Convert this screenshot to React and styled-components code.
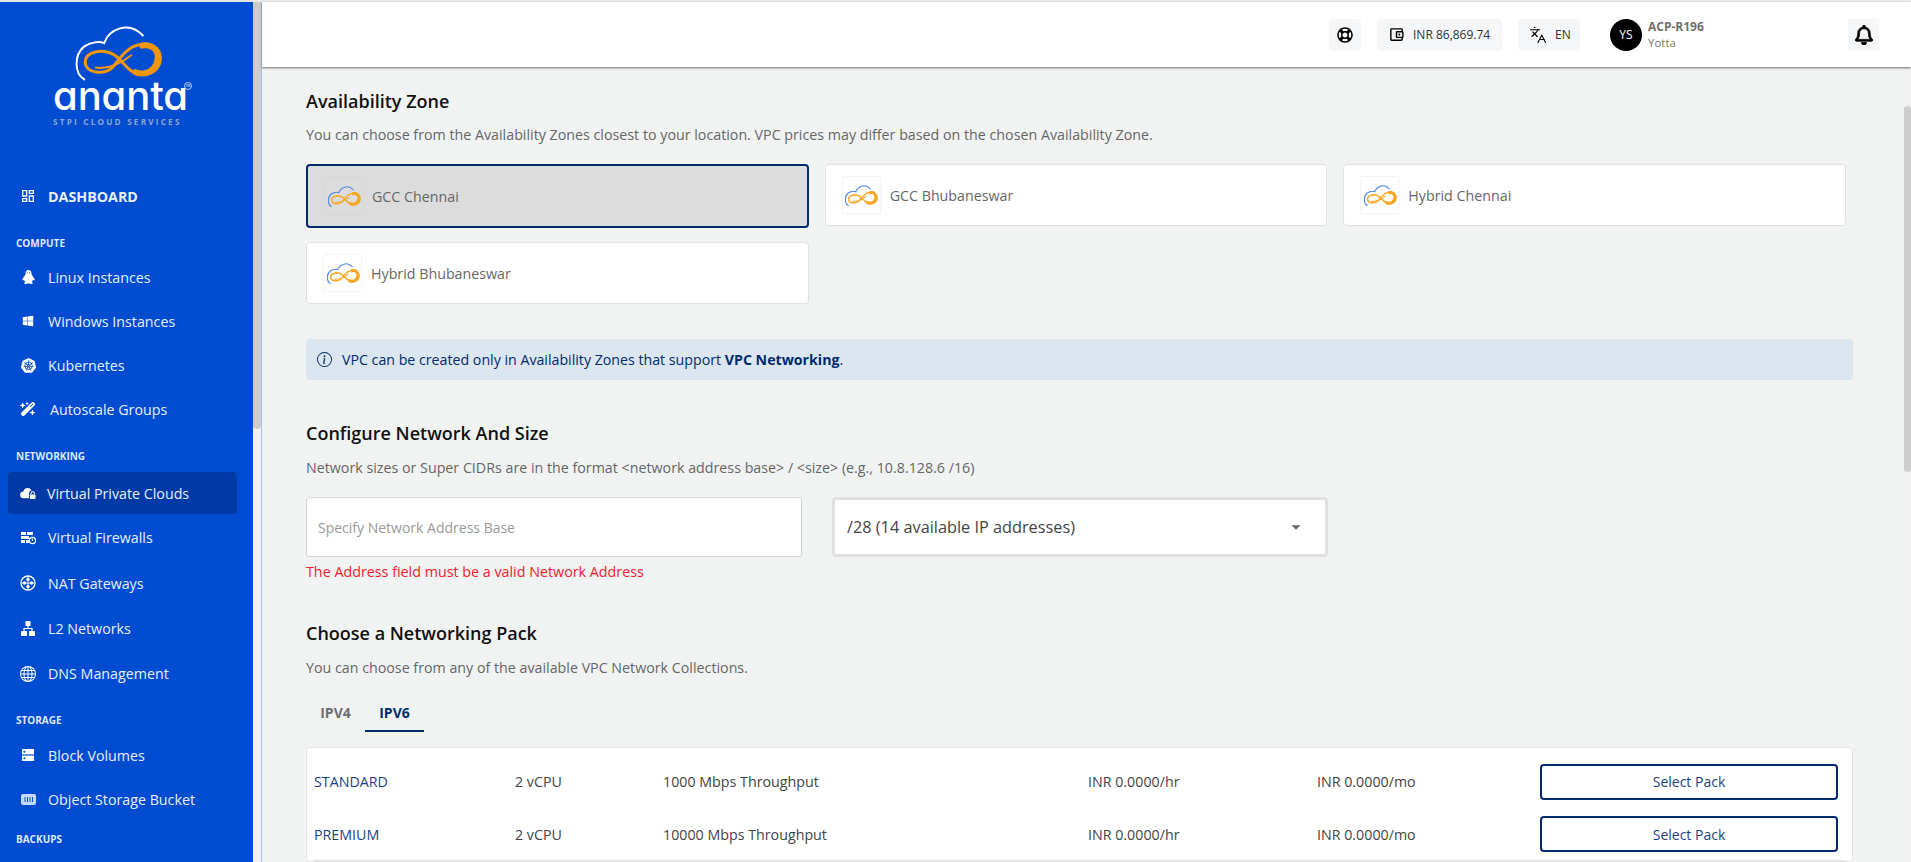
import styled, { createGlobalStyle } from 'styled-components';
import { FaWindows, FaRegLifeRing, FaRegBell } from 'react-icons/fa';
import { FaWandMagicSparkles } from 'react-icons/fa6';
import { SiKubernetes } from 'react-icons/si';
import { BsGlobe, BsInfoCircle } from 'react-icons/bs';
import { MdOutlineDashboard, MdOutlineAccountBalanceWallet, MdArrowDropDown } from 'react-icons/md';
import { Languages } from 'lucide-react';

const NAVY = '#002b6f';

const GlobalStyle = createGlobalStyle`
  html, body { margin: 0; height: 100%; overflow: hidden; }
  body { font-family: "Open Sans", "Noto Sans", sans-serif; background: #f1f3f3; }
  * { box-sizing: border-box; }
`;

const Shell = styled.div`
  display: flex;
  height: 862px;
  padding-top: 2px;
  background: #e8e8e8;
  overflow: hidden;
`;

const Sidebar = styled.aside`
  width: 253px;
  flex: none;
  background: #004cd1;
  color: #e8f0ff;
  overflow: hidden;
`;

const Track = styled.div`
  flex: none;
  width: ${(p) => p.$width}px;
  background: #f1f1f1;
`;

const Thumb = styled.div`
  width: 100%;
  height: ${(p) => p.$height}px;
  margin-top: ${(p) => p.$top || 0}px;
  background: #cdcdcd;
  border-radius: ${(p) => (p.$top ? '4px' : '0 0 4px 4px')};
`;

const Rule = styled.div`
  flex: none;
  width: 1px;
  background: #a9c3e6;
`;

const Brand = styled.div`
  height: 172px;
  padding: 21px 0 0 53px;
`;

const BrandMark = styled.div`
  margin-left: 20px;
  height: 59px;
  line-height: 0;
`;

const WordmarkRow = styled.div`
  position: relative;
  width: 131px;
  height: 34px;
  margin-top: -3px;
`;

const Wordmark = styled.div`
  font-family: Inter, "Open Sans", sans-serif;
  font-feature-settings: 'cv11' 1;
  font-size: 40px;
  font-weight: 500;
  line-height: 34px;
  color: #fff;
  letter-spacing: -0.1px;
`;

const Tm = styled.span`
  position: absolute;
  left: 131px;
  top: 3px;
  width: 8px;
  height: 8px;
  border: 1px solid #b9cdf2;
  border-radius: 50%;
  font-size: 3px;
  line-height: 6px;
  text-align: center;
  color: #fff;
`;

const Tagline = styled.div`
  width: 140px;
  margin-top: 4px;
  font-size: 8.2px;
  font-weight: 700;
  line-height: 10px;
  letter-spacing: 2.2px;
  color: #8fa5cc;
  white-space: nowrap;
`;

const NavLabel = styled.div`
  padding: ${(p) => p.$top}px 0 ${(p) => p.$bottom}px 16px;
  font-size: 10px;
  font-weight: 700;
  line-height: 14px;
  color: #dfe9ff;
`;

const NavRow = styled.div`
  display: flex;
  align-items: center;
  gap: ${(p) => p.$gap || 12}px;
  height: ${(p) => p.$height || 44}px;
  padding-left: 20px;
  font-size: 14.25px;
  font-weight: ${(p) => (p.$strong ? 700 : 400)};
  white-space: nowrap;
`;

const ActiveRow = styled(NavRow)`
  height: 42px;
  width: 229px;
  margin: 1px 0 1px 8px;
  padding-left: 12px;
  background: #003aa6;
  border-radius: 4px;
`;

const NavIcon = styled.span`
  display: flex;
  align-items: center;
  justify-content: center;
  width: 16px;
  font-size: ${(p) => p.$size || 14}px;
  color: #fff;
`;

const Main = styled.main`
  flex: 1;
  min-width: 0;
  display: flex;
  flex-direction: column;
  background: #f1f3f3;
`;

const TopBar = styled.header`
  position: relative;
  z-index: 1;
  flex: none;
  display: flex;
  align-items: center;
  justify-content: flex-end;
  gap: 16px;
  height: 65px;
  padding-right: 32px;
  background: #fff;
  box-shadow: 0 1px 2px rgba(0, 0, 0, 0.55);
`;

const Chip = styled.div`
  display: flex;
  align-items: center;
  justify-content: ${(p) => (p.$center ? 'center' : 'flex-start')};
  gap: 8px;
  width: ${(p) => p.$width}px;
  height: 32px;
  padding-left: ${(p) => (p.$center ? 0 : 11)}px;
  background: #f5f6f8;
  border-radius: ${(p) => (p.$square ? 0 : 4)}px;
  font-size: 12px;
  color: #333;
  svg { color: #000; font-size: ${(p) => p.$icon || 17}px; }
`;

const Profile = styled.div`
  display: flex;
  align-items: center;
  gap: 6px;
  width: 222px;
  margin-left: 14px;
`;

const Avatar = styled.div`
  display: flex;
  align-items: center;
  justify-content: center;
  width: 32px;
  height: 32px;
  border-radius: 50%;
  background: #000;
  color: #fff;
  font-size: 12px;
`;

const ProfileName = styled.div`
  font-size: 12px;
  font-weight: 700;
  line-height: 16px;
  color: #707070;
`;

const ProfileOrg = styled.div`
  font-size: 11.5px;
  line-height: 16px;
  color: #777;
`;

const Body = styled.div`
  flex: 1;
  min-height: 0;
  display: flex;
`;

const Content = styled.div`
  flex: 1;
  min-width: 0;
  padding: 22px 51px 0 44px;
  overflow: hidden;
`;

const Heading = styled.h2`
  margin: ${(p) => p.$top || 0}px 0 0;
  font-size: 18px;
  font-weight: 600;
  line-height: 24px;
  color: #111;
`;

const Sub = styled.p`
  margin: ${(p) => p.$top || 12}px 0 19px;
  font-size: 14.25px;
  line-height: 20px;
  white-space: nowrap;
  color: #666;
`;

const ZoneGrid = styled.div`
  display: grid;
  grid-template-columns: repeat(3, 1fr);
  gap: 14px 16px;
  align-items: start;
  margin-right: 7px;
`;

const Zone = styled.div`
  display: flex;
  align-items: center;
  gap: 10px;
  height: ${(p) => (p.$selected ? 64 : 62)}px;
  padding-left: 17px;
  background: ${(p) => (p.$selected ? '#dcdcdc' : '#fff')};
  border: ${(p) => (p.$selected ? `2px solid ${NAVY}` : '1px solid #dfe1e3')};
  border-radius: 4px;
  font-size: 14.25px;
  color: #666;
`;

const ZoneLogo = styled.div`
  display: flex;
  align-items: center;
  justify-content: center;
  width: 37px;
  height: 36px;
  background: ${(p) => (p.$selected ? '#dcdcdc' : '#fff')};
  box-shadow: 0 0 2px rgba(0, 0, 0, ${(p) => (p.$selected ? 0.06 : 0.14)});
`;

const Notice = styled.div`
  display: flex;
  align-items: center;
  gap: 10px;
  height: 41px;
  margin-top: 35px;
  padding-left: 11px;
  background: #dce6f0;
  border-radius: 4px;
  font-size: 14.2px;
  color: ${NAVY};
  svg { font-size: 15px; }
`;

const FieldRow = styled.div`
  display: flex;
  gap: 30px;
`;

const AddressInput = styled.input`
  display: block;
  width: 496px;
  height: 60px;
  padding: 0 11px;
  background: #fff;
  border: 1px solid #cfd3d8;
  border-radius: 3px;
  font: 14px "Open Sans", sans-serif;
  &::placeholder { color: #9a9a9a; opacity: 1; }
`;

const SizeSelect = styled.div`
  display: flex;
  align-items: center;
  justify-content: space-between;
  width: 496px;
  height: 60px;
  padding: 0 18px 0 12px;
  background: #fff;
  border: 3px solid #e0e0e0;
  border-radius: 4px;
  font-size: 16.3px;
  color: #444;
  svg { font-size: 22px; color: #666; }
`;

const FieldError = styled.div`
  margin-top: 5px;
  font-size: 14.3px;
  line-height: 20px;
  color: #f0212e;
`;

const Tabs = styled.div`
  display: flex;
  margin-top: -1px;
`;

const Tab = styled.div`
  width: 59px;
  height: 36px;
  padding-top: 7px;
  text-align: center;
  font-size: 14px;
  font-weight: 700;
  line-height: 20px;
  color: ${(p) => (p.$active ? NAVY : '#6f6f6f')};
  border-bottom: 2px solid ${(p) => (p.$active ? NAVY : 'transparent')};
`;

const PackCard = styled.div`
  margin-top: 15px;
  padding: 7px 7px 0;
  background: #fff;
  border: 1px solid #e2e4e6;
  border-radius: 4px;
`;

const PackRow = styled.div`
  display: grid;
  grid-template-columns: 201px 148px 425px 229px 223px 298px;
  align-items: center;
  height: 53px;
  border-bottom: ${(p) => (p.$last ? '1px solid #dfe1e3' : 'none')};
  font-size: 14.25px;
  color: #444;
`;

const PackName = styled.div`
  color: #1c3f7f;
`;

const PackButton = styled.button`
  height: 36px;
  background: #fff;
  border: 2px solid ${NAVY};
  border-radius: 4px;
  font: 14px "Open Sans", sans-serif;
  color: #1c3f7f;
`;

const LogoMark = ({ width, height, cloud, ring, weight = 1 }) => (
  <svg width={width} height={height} viewBox="96 38 272 180" fill="none" strokeLinecap="round">
    <path d="M130 208C100 190 98 135 130 108C150 95 175 92 190 98C205 55 265 30 307 75" stroke={cloud} strokeWidth={6 * weight} />
    <path
      d="M133 155C133 125 185 112 222 135C250 152 265 195 310 193C345 192 362 165 360 140C358 110 325 95 295 103C255 112 235 150 215 172C190 195 133 190 133 155Z"
      stroke={ring}
      strokeWidth={9 * weight}
    />
    <path d="M285 186C320 200 352 175 352 140C352 115 330 100 305 106" stroke={ring} strokeWidth={18 * weight} />
    <path d="M165 172C200 178 240 160 272 135" stroke={ring} strokeWidth={6 * weight} />
  </svg>
);

const LinuxIcon = () => (
  <svg width="13" height="14" viewBox="0 0 13 14" fill="#fff">
    <path d="M6.5 0C4.6 0 3.6 1.5 3.6 3.2C3.6 4.2 3.2 4.9 2.4 6C1.5 7.2 0.9 8.2 0.3 9.6C0 10.3 0.3 10.7 1.1 10.3L2 9.8C2.2 10.8 2.7 11.5 3.4 12.1C2.4 12.5 1.9 13 2.3 13.5C2.8 14.1 4.9 14 6.5 13.2C8.1 14 10.2 14.1 10.7 13.5C11.1 13 10.6 12.5 9.6 12.1C10.3 11.5 10.8 10.8 11 9.8L11.9 10.3C12.7 10.7 13 10.3 12.7 9.6C12.1 8.2 11.5 7.2 10.6 6C9.8 4.9 9.4 4.2 9.4 3.2C9.4 1.5 8.4 0 6.5 0Z" />
    <circle cx="5.4" cy="2.8" r="0.55" fill="#004cd1" />
    <circle cx="7.6" cy="2.8" r="0.55" fill="#004cd1" />
  </svg>
);

const VpcIcon = () => (
  <svg width="17" height="14" viewBox="0 0 17 14" fill="#fff">
    <path d="M4 12.5a3.6 3.6 0 0 1-.5-7.2A4.8 4.8 0 0 1 12.2 4 3.6 3.6 0 0 0 9.5 7.4V12.5Z" />
    <rect x="10.5" y="8.5" width="6" height="5" rx="0.8" />
    <path d="M11.7 8.5V7.4a1.8 1.8 0 0 1 3.6 0v1.1" fill="none" stroke="#fff" strokeWidth="1.1" />
  </svg>
);

const FirewallIcon = () => (
  <svg width="15" height="14" viewBox="0 0 15 14" fill="#fff">
    <rect x="0" y="1" width="5" height="3" />
    <rect x="6" y="1" width="6" height="3" />
    <rect x="0" y="5" width="8" height="3" />
    <rect x="0" y="9" width="4" height="3" />
    <rect x="5" y="9" width="3" height="3" />
    <circle cx="11.5" cy="9.5" r="3.1" fill="none" stroke="#fff" strokeWidth="1.2" />
    <path d="M11.5 7.8v2" stroke="#fff" strokeWidth="1.1" />
  </svg>
);

const NatIcon = () => (
  <svg width="16" height="16" viewBox="0 0 16 16" fill="none" stroke="#fff">
    <circle cx="8" cy="8" r="7" strokeWidth="1.3" />
    <path d="M8 1.5V14.5M1.5 8H14.5" strokeWidth="0.9" />
    <g fill="#fff" stroke="none">
      <circle cx="8" cy="4.4" r="1.7" />
      <circle cx="8" cy="11.6" r="1.7" />
      <circle cx="4.4" cy="8" r="1.7" />
      <circle cx="11.6" cy="8" r="1.7" />
    </g>
  </svg>
);

const NetworkIcon = () => (
  <svg width="14" height="15" viewBox="0 0 14 15" fill="#fff">
    <rect x="4.5" y="0" width="5" height="5" rx="0.5" />
    <rect x="0" y="10" width="6" height="5" rx="0.5" />
    <rect x="8" y="10" width="6" height="5" rx="0.5" />
    <path d="M7 5V7.5M3 10V7.5H11V10" fill="none" stroke="#fff" strokeWidth="1.2" />
  </svg>
);

const VolumeIcon = () => (
  <svg width="12" height="12" viewBox="0 0 12 12" fill="#fff">
    <rect width="12" height="5.4" />
    <rect y="6.6" width="12" height="5.4" />
    <circle cx="2.4" cy="2.7" r="1" fill="#004cd1" />
    <circle cx="2.4" cy="9.3" r="1" fill="#004cd1" />
  </svg>
);

const BucketIcon = () => (
  <svg width="15" height="11" viewBox="0 0 15 11">
    <rect width="15" height="11" rx="2" fill="#c6d9fb" />
    <path d="M4 3V8M6.5 3V8M9 3V8M11.5 3V8" stroke="#004cd1" strokeWidth="1" />
  </svg>
);

const navGroups = [
  {
    label: 'COMPUTE',
    top: 18,
    bottom: 5,
    items: [
      { name: 'Linux Instances', icon: <LinuxIcon /> },
      { name: 'Windows Instances', icon: <FaWindows size={12} /> },
      { name: 'Kubernetes', icon: <SiKubernetes size={15} /> },
      { name: 'Autoscale Groups', icon: <FaWandMagicSparkles size={16} />, gap: 14 },
    ],
  },
  {
    label: 'NETWORKING',
    top: 18,
    bottom: 8,
    items: [
      { name: 'Virtual Private Clouds', icon: <VpcIcon />, active: true, gap: 11 },
      { name: 'Virtual Firewalls', icon: <FirewallIcon />, height: 45 },
      { name: 'NAT Gateways', icon: <NatIcon />, height: 46 },
      { name: 'L2 Networks', icon: <NetworkIcon />, height: 45 },
      { name: 'DNS Management', icon: <BsGlobe size={16} />, height: 45 },
    ],
  },
  {
    label: 'STORAGE',
    top: 17,
    bottom: 6,
    items: [
      { name: 'Block Volumes', icon: <VolumeIcon /> },
      { name: 'Object Storage Bucket', icon: <BucketIcon /> },
    ],
  },
  { label: 'BACKUPS', top: 11, bottom: 6, items: [] },
];

const zones = ['GCC Chennai', 'GCC Bhubaneswar', 'Hybrid Chennai', 'Hybrid Bhubaneswar'];

const packs = [
  { name: 'STANDARD', speed: '1000 Mbps Throughput' },
  { name: 'PREMIUM', speed: '10000 Mbps Throughput', last: true },
];

const App = () => (
  <>
    <GlobalStyle />
    <Shell>
      <Sidebar>
        <Brand>
          <BrandMark>
            <LogoMark width={90} height={60} cloud="#fff" ring="#f2960c" />
          </BrandMark>
          <WordmarkRow>
            <Wordmark>ananta</Wordmark>
            <Tm>TM</Tm>
          </WordmarkRow>
          <Tagline>STPI CLOUD SERVICES</Tagline>
        </Brand>
        <NavRow $strong>
          <NavIcon $size={16}><MdOutlineDashboard /></NavIcon>
          DASHBOARD
        </NavRow>
        {navGroups.map((group) => (
          <div key={group.label}>
            <NavLabel $top={group.top} $bottom={group.bottom}>{group.label}</NavLabel>
            {group.items.map((item) => {
              const Row = item.active ? ActiveRow : NavRow;
              return (
                <Row key={item.name} $gap={item.gap} $height={item.height}>
                  <NavIcon>{item.icon}</NavIcon>
                  {item.name}
                </Row>
              );
            })}
          </div>
        ))}
      </Sidebar>
      <Track $width={8}>
        <Thumb $height={427} />
      </Track>
      <Rule />
      <Main>
        <TopBar>
          <Chip $width={32} $center $icon={16}><FaRegLifeRing /></Chip>
          <Chip $width={125}>
            <MdOutlineAccountBalanceWallet />
            INR 86,869.74
          </Chip>
          <Chip $width={62}>
            <Languages size={18} strokeWidth={1.5} />
            EN
          </Chip>
          <Profile>
            <Avatar>YS</Avatar>
            <div>
              <ProfileName>ACP-R196</ProfileName>
              <ProfileOrg>Yotta</ProfileOrg>
            </div>
          </Profile>
          <Chip $width={31} $center $square $icon={20}>
            <FaRegBell stroke="#000" strokeWidth={20} />
          </Chip>
        </TopBar>
        <Body>
          <Content>
            <Heading>Availability Zone</Heading>
            <Sub>You can choose from the Availability Zones closest to your location. VPC prices may differ based on the chosen Availability Zone.</Sub>
            <ZoneGrid>
              {zones.map((zone, i) => (
                <Zone key={zone} $selected={i === 0}>
                  <ZoneLogo $selected={i === 0}>
                    <LogoMark width={34} height={23} cloud="#4f86e0" ring="#f6a623" weight={1.35} />
                  </ZoneLogo>
                  {zone}
                </Zone>
              ))}
            </ZoneGrid>
            <Notice>
              <BsInfoCircle />
              <span>VPC can be created only in Availability Zones that support <b>VPC Networking</b>.</span>
            </Notice>

            <Heading $top={41}>Configure Network And Size</Heading>
            <Sub $top={13}>Network sizes or Super CIDRs are in the format &lt;network address base&gt; / &lt;size&gt; (e.g., 10.8.128.6 /16)</Sub>
            <FieldRow>
              <AddressInput placeholder="Specify Network Address Base" />
              <SizeSelect>
                /28 (14 available IP addresses)
                <MdArrowDropDown />
              </SizeSelect>
            </FieldRow>
            <FieldError>The Address field must be a valid Network Address</FieldError>

            <Heading $top={39}>Choose a Networking Pack</Heading>
            <Sub $top={13}>You can choose from any of the available VPC Network Collections.</Sub>
            <Tabs>
              <Tab>IPV4</Tab>
              <Tab $active>IPV6</Tab>
            </Tabs>
            <PackCard>
              {packs.map((pack) => (
                <PackRow key={pack.name} $last={pack.last}>
                  <PackName>{pack.name}</PackName>
                  <div>2 vCPU</div>
                  <div>{pack.speed}</div>
                  <div>INR 0.0000/hr</div>
                  <div>INR 0.0000/mo</div>
                  <PackButton>Select Pack</PackButton>
                </PackRow>
              ))}
            </PackCard>
          </Content>
          <Track $width={7}>
            <Thumb $top={39} $height={366} />
          </Track>
        </Body>
      </Main>
    </Shell>
  </>
);

export default App;
